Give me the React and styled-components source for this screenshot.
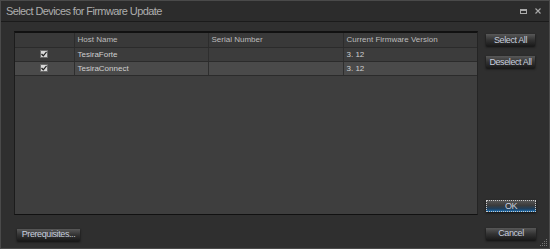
import styled, { createGlobalStyle } from "styled-components";

const GlobalStyle = createGlobalStyle`
	html, body {
		margin: 0;
		padding: 0;
		background: #2e2e2e;
	}
	* {
		box-sizing: border-box;
	}
`;

const Window = styled.div`
	width: 550px;
	height: 249px;
	display: flex;
	flex-direction: column;
	background: #2f2f2f;
	border: 1px solid #4a4a4a;
	font-family: "Liberation Sans", Arial, sans-serif;
	color: #c4c4c4;
`;

const TitleBar = styled.div`
	height: 21px;
	flex: none;
	display: flex;
	align-items: center;
	justify-content: space-between;
	padding: 0 8px 0 5px;
	background: #2c2c2c;
	border-bottom: 1px solid #1b1b1b;
`;

const Title = styled.div`
	font-size: 11px;
	letter-spacing: -0.6px;
	color: #aeaeae;
`;

const WindowControls = styled.div`
	display: flex;
	align-items: center;
	gap: 8px;
	color: #a8a8a8;
	font-size: 9px;
`;

const Body = styled.div`
	flex: 1;
	display: grid;
	grid-template-columns: 464px 50px;
	grid-template-rows: 184px auto;
	column-gap: 8px;
	row-gap: 7px;
	padding: 9px 13px 0 13px;
	position: relative;
`;

const TableBox = styled.div`
	background: #3e3e3e;
	border-top: 2px solid #111;
	border-left: 1px solid #1c1c1c;
	border-bottom: 1px solid #111;
	border-right: 1px solid #242424;
	overflow: hidden;
`;

const Grid = styled.table`
	width: 100%;
	border-collapse: collapse;
	table-layout: fixed;
	font-size: 8px;
`;

const HeadCell = styled.th`
	height: 14px;
	padding: 0 0 0 3px;
	text-align: left;
	font-weight: normal;
	color: #bcbcbc;
	background: #393939;
	border-right: 1px solid #2c2c2c;
	border-bottom: 1px solid #2b2b2b;
	&:last-child {
		border-right: none;
	}
`;

const Row = styled.tr`
	background: ${(p) => (p.$alt ? "#4a4a4a" : "#3c3c3c")};
`;

const Cell = styled.td`
	height: 14px;
	padding: 0 0 0 3px;
	color: #cfcfcf;
	border-right: 1px solid #2e2e2e;
	border-bottom: 1px solid #2b2b2b;
	text-align: ${(p) => (p.$center ? "center" : "left")};
	&:last-child {
		border-right: none;
	}
`;

const Check = styled.span`
	display: inline-block;
	width: 8px;
	height: 8px;
	margin-left: -3px;
	vertical-align: middle;
	background: #d8d8d8;
	border: 1px solid #6a6a6a;
	position: relative;
`;

const SideColumn = styled.div`
	display: flex;
	flex-direction: column;
	gap: 10px;
	padding-top: 3px;
	padding-bottom: 3px;
`;

const Spacer = styled.div`
	flex: 1;
`;

const Button = styled.button`
	width: ${(p) => p.$w || "49px"};
	height: 12px;
	padding: 0;
	font-family: "Liberation Sans", Arial, sans-serif;
	font-size: 9px;
	line-height: 11px;
	letter-spacing: -0.4px;
	white-space: nowrap;
	color: #c7cede;
	background: linear-gradient(#585858, #333 50%, #1a1a1a);
	border: none;
	box-shadow: 0 1px 2px #111;
	cursor: default;
`;

const OkButton = styled(Button)`
	background: linear-gradient(#5a5a5a, #3b3b3b 45%, #1d3f5e 75%, #1e78c0);
	outline: 1px dotted #c9c9c9;
	outline-offset: -1px;
`;

const BottomRow = styled.div`
	grid-column: 1 / 2;
	padding-left: 3px;
	padding-top: 1px;
`;

const BottomRight = styled.div`
	padding-top: 0px;
`;

const Grip = styled.svg`
	position: absolute;
	right: 1px;
	bottom: 1px;
`;

function CheckMark() {
	return (
		<Check>
			<svg width="6" height="6" viewBox="0 0 6 6" style={{ position: "absolute", left: 0, top: 0 }}>
				<path d="M0.5 3 L2.3 4.8 L5.6 0.8" stroke="#222" strokeWidth="1.3" fill="none" />
			</svg>
		</Check>
	);
}

const devices = [
	{ name: "TesiraForte", serial: "", version: "3. 12" },
	{ name: "TesiraConnect", serial: "", version: "3. 12" },
];

export default function App() {
	return (
		<>
			<GlobalStyle />
			<Window>
				<TitleBar>
					<Title>Select Devices for Firmware Update</Title>
					<WindowControls>
						<svg width="7" height="5" viewBox="0 0 7 5">
							<rect x="0.5" y="0.5" width="6" height="4" fill="none" stroke="#aaa" />
							<rect x="0" y="0" width="7" height="2" fill="#aaa" />
						</svg>
						<svg width="6" height="6" viewBox="0 0 6 6">
							<path d="M0.5 0.5 L5.5 5.5 M5.5 0.5 L0.5 5.5" stroke="#aaa" strokeWidth="1.1" />
						</svg>
					</WindowControls>
				</TitleBar>
				<Body>
					<TableBox>
						<Grid>
							<colgroup>
								<col style={{ width: 59 }} />
								<col style={{ width: 134 }} />
								<col style={{ width: 135 }} />
								<col />
							</colgroup>
							<thead>
								<tr>
									<HeadCell />
									<HeadCell>Host Name</HeadCell>
									<HeadCell>Serial Number</HeadCell>
									<HeadCell>Current Firmware Version</HeadCell>
								</tr>
							</thead>
							<tbody>
								{devices.map((d, i) => (
									<Row key={d.name} $alt={i % 2 === 1}>
										<Cell $center>
											<CheckMark />
										</Cell>
										<Cell>{d.name}</Cell>
										<Cell>{d.serial}</Cell>
										<Cell>{d.version}</Cell>
									</Row>
								))}
							</tbody>
						</Grid>
					</TableBox>
					<SideColumn>
						<Button>Select All</Button>
						<Button>Deselect All</Button>
						<Spacer />
						<OkButton $w="50px">OK</OkButton>
					</SideColumn>
					<BottomRow>
						<Button $w="63px">Prerequisites...</Button>
					</BottomRow>
					<BottomRight>
						<Button $w="50px">Cancel</Button>
					</BottomRight>
					<Grip width="9" height="9" viewBox="0 0 9 9">
						{[
							[7, 1], [5, 3], [7, 3], [3, 5], [5, 5], [7, 5], [1, 7], [3, 7], [5, 7], [7, 7],
						].map(([x, y]) => (
							<rect key={`${x}-${y}`} x={x} y={y} width="1" height="1" fill="#777" />
						))}
					</Grip>
				</Body>
			</Window>
		</>
	);
}
